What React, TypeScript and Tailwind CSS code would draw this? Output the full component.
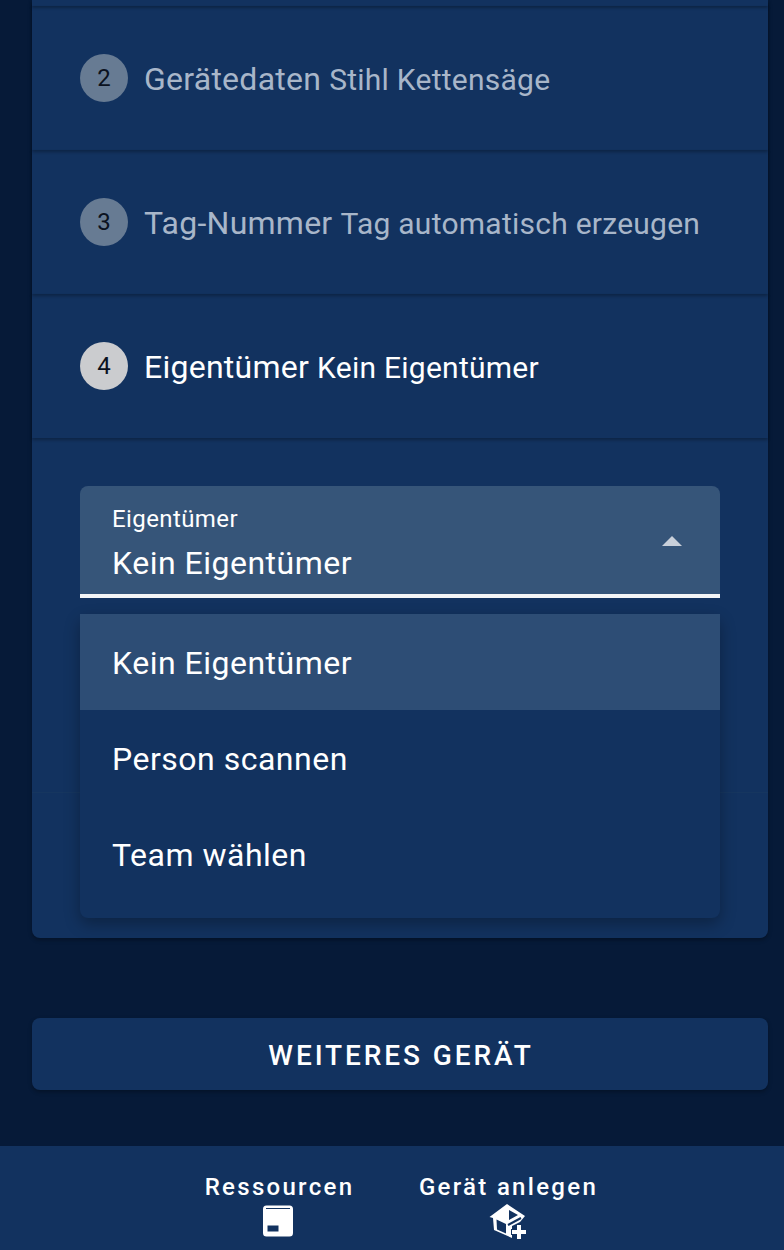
import React from "react";

function Step({ n, title, sub, active }: { n: number; title: string; sub: string; active?: boolean }) {
  return (
    <div className="relative flex h-[144px] items-center pl-12 shadow-[0_2px_3px_rgba(0,0,0,0.28)]">
      <div className={active ? "flex h-12 w-12 items-center justify-center rounded-full bg-[#cbcccf] text-2xl text-[#0b1220]" : "flex h-12 w-12 items-center justify-center rounded-full bg-[#677b93] text-2xl text-[#0b1220]"}>
        {n}
      </div>
      <div className={active ? "ml-4 flex items-baseline gap-2 pt-[2px] text-white" : "ml-4 flex items-baseline gap-2 pt-[2px] text-[#a8b6c9]"}>
        <span className="text-[32px] tracking-[0.25px]">{title}</span>
        <span className="text-[30px] tracking-[0.25px]">{sub}</span>
      </div>
    </div>
  );
}

function MenuItem({ label, selected }: { label: string; selected?: boolean }) {
  return (
    <div className={selected ? "flex h-24 items-center bg-[#2d4d75] pl-8 pt-[2px] text-[32px] tracking-[0.5px] text-white" : "flex h-24 items-center pl-8 pt-[2px] text-[32px] tracking-[0.5px] text-white"}>
      {label}
    </div>
  );
}

export default function App() {
  return (
    <div className="flex h-[1250px] w-[784px] flex-col overflow-hidden bg-[#061a38] font-['Roboto',sans-serif]">
      <div className="ml-8 mr-4 h-[938px] rounded-b-lg bg-[#12325f] shadow-[0_2px_4px_rgba(0,0,0,0.3)]">
        <div className="h-[6px] shadow-[0_2px_3px_rgba(0,0,0,0.28)]" />
        <Step n={2} title="Gerätedaten" sub="Stihl Kettensäge" />
        <Step n={3} title="Tag-Nummer" sub="Tag automatisch erzeugen" />
        <Step n={4} title="Eigentümer" sub="Kein Eigentümer" active />
        <div className="relative px-12 pt-12">
          <div className="absolute inset-x-0 top-[354px] h-px bg-[#16365f]" />
          <div className="relative h-[112px] rounded-t-lg border-b-4 border-[#f4f5f6] bg-[#365579] pl-8 text-white">
            <div className="pt-[17px] text-2xl leading-[32px] tracking-[0.4px]">Eigentümer</div>
            <div className="pt-[6px] text-[32px] leading-[44px] tracking-[0.5px]">Kein Eigentümer</div>
            <svg className="absolute right-[38px] top-[50px]" width="20" height="10" viewBox="0 0 20 10">
              <path d="M0 10 L10 0 L20 10 Z" fill="#c9d0da" />
            </svg>
          </div>
          <div className="relative mt-4 h-[304px] rounded-lg bg-[#12325f] pb-4 shadow-[0_6px_16px_rgba(0,0,0,0.3)]">
            <MenuItem label="Kein Eigentümer" selected />
            <MenuItem label="Person scannen" />
            <MenuItem label="Team wählen" />
          </div>
        </div>
      </div>
      <button className="ml-8 mr-4 mt-20 flex h-[72px] items-center justify-center rounded-lg bg-[#12325f] pl-[2px] pt-[3px] text-[28px] font-medium tracking-[2.9px] text-white shadow-[0_2px_4px_rgba(0,0,0,0.3)]">
        WEITERES GERÄT
      </button>
      <div className="mt-14 flex h-[104px] shrink-0 justify-center gap-[67px] bg-[#12325f] pl-[18px] text-white">
        <div className="flex w-[148px] flex-col items-center pt-6">
          <span className="whitespace-nowrap text-2xl font-medium leading-[34px] tracking-[2.3px]">Ressourcen</span>
          <svg className="mr-[3px] mt-[1px] shrink-0" width="32" height="32" viewBox="0 0 32 32">
            <path fillRule="evenodd" d="M4.5 0.5H27.5A3.5 3.5 0 0 1 31 4V28A3.5 3.5 0 0 1 27.5 31.5H4.5A3.5 3.5 0 0 1 1 28V4A3.5 3.5 0 0 1 4.5 0.5ZM4 3V4H28V3ZM5.5 20.5V26.5H16.5V20.5Z" fill="#fff" />
          </svg>
        </div>
        <div className="flex w-[176px] flex-col items-center pt-6">
          <span className="whitespace-nowrap text-2xl font-medium leading-[34px] tracking-[2.3px]">Gerät anlegen</span>
          <svg className="ml-[1px] mt-[-1px] shrink-0" width="40" height="38" viewBox="0 0 40 38">
            <path d="M18 1 L36 13 L31 19 L23 23 L23 35 L5 27 L4 15 L0.5 14 Z" fill="#fff" />
            <path d="M7.5 16.5 L17 21 V30.5 L8 26.5 Z M20 7 L29 12 L20 17 Z" fill="#12325f" />
            <path d="M19 22 L32 15" stroke="#12325f" strokeWidth="2" />
            <path d="M27 21 H33 V26 H38 V32 H33 V37 H27 V32 H22 V26 H27 Z" fill="#12325f" />
            <path d="M28 22 H32 V27 H37 V31 H32 V36 H28 V31 H23 V27 H28 Z" fill="#fff" />
          </svg>
        </div>
      </div>
    </div>
  );
}
